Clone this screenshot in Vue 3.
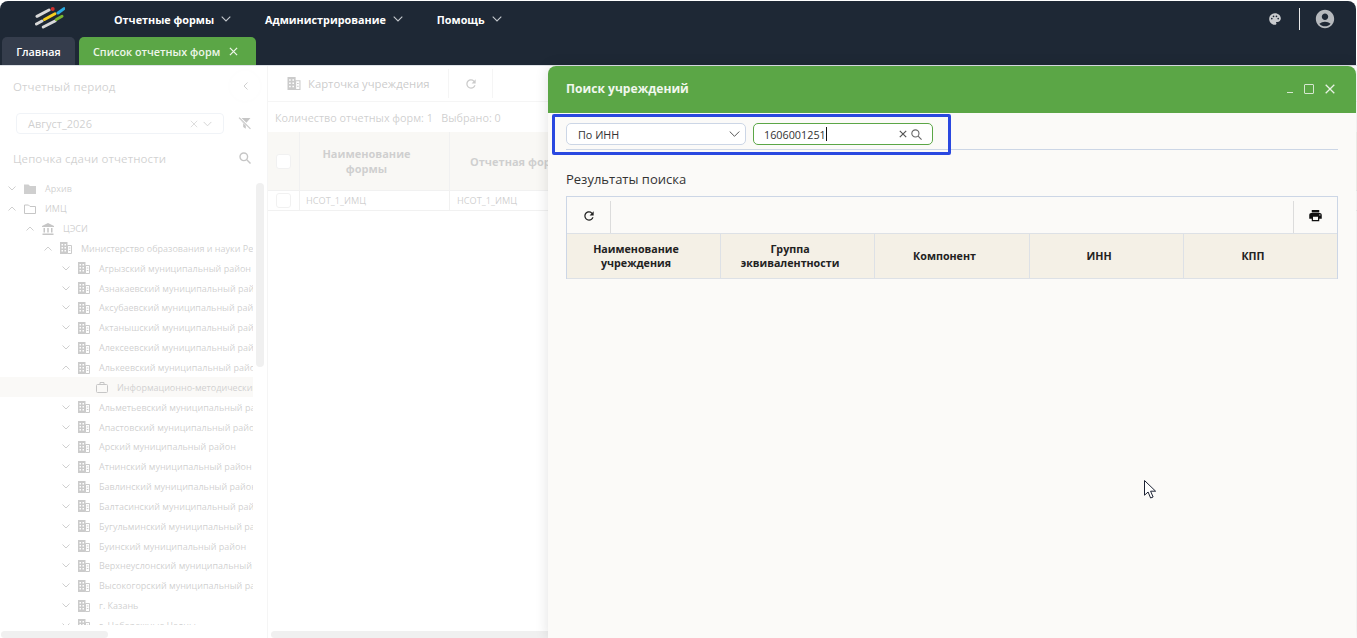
<script setup>
const icons = {
  refresh: 'M17.65 6.35A7.958 7.958 0 0 0 12 4c-4.42 0-7.99 3.58-7.99 8s3.57 8 7.99 8c3.73 0 6.84-2.55 7.73-6h-2.08A5.99 5.99 0 0 1 12 18c-3.31 0-6-2.69-6-6s2.69-6 6-6c1.66 0 3.14.69 4.22 1.78L13 11h7V4l-2.35 2.35z',
  print: 'M19 8H5c-1.66 0-3 1.34-3 3v6h4v4h12v-4h4v-6c0-1.66-1.34-3-3-3zm-3 11H8v-5h8v5zm3-7c-.55 0-1-.45-1-1s.45-1 1-1 1 .45 1 1-.45 1-1 1zm-1-9H6v4h12V3z',
  user: 'M12 2C6.48 2 2 6.48 2 12s4.48 10 10 10 10-4.48 10-10S17.52 2 12 2zm0 4c1.93 0 3.5 1.57 3.5 3.5S13.93 13 12 13s-3.5-1.57-3.5-3.5S10.07 6 12 6zm0 14c-2.03 0-4.43-.82-6.14-2.88a9.947 9.947 0 0 1 12.28 0C16.43 19.18 14.03 20 12 20z',
  palette: 'M12 2C6.49 2 2 6.49 2 12s4.49 10 10 10c1.38 0 2.5-1.12 2.5-2.5 0-.61-.23-1.2-.64-1.67a.528.528 0 0 1-.13-.33c0-.28.22-.5.5-.5H16c3.31 0 6-2.69 6-6 0-4.96-4.49-9-10-9zm-5.5 11c-.83 0-1.5-.67-1.5-1.5S5.67 10 6.5 10s1.5.67 1.5 1.5S7.33 13 6.5 13zm3-4C8.67 9 8 8.33 8 7.5S8.67 6 9.5 6s1.5.67 1.5 1.5S10.33 9 9.5 9zm5 0c-.83 0-1.5-.67-1.5-1.5S13.67 6 14.5 6s1.5.67 1.5 1.5S15.33 9 14.5 9zm3 4c-.83 0-1.5-.67-1.5-1.5s.67-1.5 1.5-1.5 1.5.67 1.5 1.5-.67 1.5-1.5 1.5z'
}
const nav = ['Отчетные формы', 'Администрирование', 'Помощь']
const districts = [
  'Агрызский муниципальный район', 'Азнакаевский муниципальный район', 'Аксубаевский муниципальный район',
  'Актанышский муниципальный район', 'Алексеевский муниципальный район'
]
const districts2 = [
  'Альметьевский муниципальный район', 'Апастовский муниципальный район', 'Арский муниципальный район',
  'Атнинский муниципальный район', 'Бавлинский муниципальный район', 'Балтасинский муниципальный район',
  'Бугульминский муниципальный район', 'Буинский муниципальный район', 'Верхнеуслонский муниципальный район',
  'Высокогорский муниципальный район', 'г. Казань', 'г. Набережные Челны'
]
const tree = [
  { t: 'Архив', d: 0, i: 'fill', open: false },
  { t: 'ИМЦ', d: 0, i: 'open', open: true },
  { t: 'ЦЭСИ', d: 1, i: 'bank', open: true },
  { t: 'Министерство образования и науки Республики Татарстан', d: 2, i: 'bld', open: true },
  ...districts.map(t => ({ t, d: 3, i: 'bld', open: false })),
  { t: 'Алькеевский муниципальный район', d: 3, i: 'bld', open: true },
  { t: 'Информационно-методический центр', d: 4, i: 'case', leaf: true, sel: true },
  ...districts2.map(t => ({ t, d: 3, i: 'bld', open: false }))
]
const cols = [
  'Наименование учреждения', 'Группа эквивалентности', 'Компонент', 'ИНН', 'КПП'
]
</script>

<template>
  <div class="shell">
    <header class="bar">
      <div class="top">
        <svg class="logo" width="30" height="22" viewBox="0 0 30 22" fill="none" stroke-linecap="round" stroke-width="3">
          <path d="M2 9.300 14 3" stroke="#d8d8d8" />
          <path d="M1.500 17 7 14" stroke="#d8d8d8" />
          <path d="M8.300 20 20 14" stroke="#d8d8d8" />
          <path d="M9.500 12.500 20 6.800" stroke="#f5cf1f" />
          <path d="M23 6 29 1.600" stroke="#29abe2" />
          <path d="M21.300 12.500 27 9.300" stroke="#79b530" />
          <circle cx="17.700" cy="2" r="2" fill="#d0312d" stroke="none" />
        </svg>
        <nav class="nav">
          <a v-for="n in nav" :key="n" class="nav-item">
            <span>{{ n }}</span>
            <svg width="10" height="6" viewBox="0 0 10 6" fill="none" stroke="#c4c8cd" stroke-width="1.100"><path d="M.7.7 5 5l4.300-4.300" /></svg>
          </a>
        </nav>
        <div class="tools">
          <svg width="14" height="14" viewBox="0 0 24 24" fill="#c9cbce"><path :d="icons.palette" /></svg>
          <i class="tool-sep"></i>
          <svg width="22" height="22" viewBox="0 0 24 24" fill="#b6b9bd"><path :d="icons.user" /></svg>
        </div>
      </div>
      <div class="tabs">
        <div class="tab home">Главная</div>
        <div class="tab active">Список отчетных форм
          <svg class="tab-x" width="9" height="9" viewBox="0 0 10 10" stroke="#eef6ea" stroke-width="1.400"><path d="m1 1 8 8M9 1 1 9" /></svg>
        </div>
      </div>
    </header>

    <div class="body">
      <aside class="side">
        <div class="side-head">
          <span class="side-title">Отчетный период</span>
          <span class="collapse">
            <svg width="5" height="8" viewBox="0 0 5 8" fill="none" stroke="#555" stroke-width="1"><path d="M4.500.5 1 4l3.500 3.500" /></svg>
          </span>
        </div>
        <div class="period-row">
          <div class="period">
            <span class="period-val">Август_2026</span>
            <svg class="period-x" width="8" height="8" viewBox="0 0 10 10" stroke="#777" stroke-width="1.100"><path d="m1 1 8 8M9 1 1 9" /></svg>
            <svg width="9" height="6" viewBox="0 0 10 6" fill="none" stroke="#666" stroke-width="1.100"><path d="M.7.7 5 5l4.300-4.300" /></svg>
          </div>
          <svg class="filter" width="13" height="13" viewBox="0 0 12 12" fill="#333"><path d="M.5 1h11L7.200 6v4.800L4.800 9.300V6z" /><path d="M.5 0 12 11" stroke="#fff" stroke-width="2.400" /><path d="M1 .5 11.500 11" stroke="#333" stroke-width="1" /></svg>
        </div>
        <div class="chain-row">
          <span class="side-title">Цепочка сдачи отчетности</span>
          <svg width="12" height="12" viewBox="0 0 12 12" fill="none" stroke="#333" stroke-width="1.400"><circle cx="4.800" cy="4.800" r="3.800" /><path d="m7.800 7.800 3.700 3.700" /></svg>
        </div>
        <div class="tree-wrap">
          <ul class="tree">
            <li v-for="n in tree" :key="n.t" class="node" :class="{ picked: n.sel }" :style="{ paddingLeft: 8 + n.d * 18 + 'px' }">
              <svg v-if="!n.leaf" class="chev" width="8" height="5" viewBox="0 0 8 5" fill="none" stroke="#555" stroke-width="1">
                <path :d="n.open ? 'M.5 4.500 4 1l3.500 3.500' : 'M.5.5 4 4 7.500.5'" />
              </svg>
              <span v-else class="chev"></span>
              <svg class="ico" width="12" height="12" viewBox="0 0 12 12">
                <path v-if="n.i === 'fill'" fill="#555" d="M0 1.500h4.500L6 3h6v8H0z" />
                <path v-else-if="n.i === 'open'" fill="none" stroke="#333" d="M.5 2h4l1.500 1.500h5.500v7H.5z" />
                <g v-else-if="n.i === 'bank'" fill="#333">
                  <path d="M6 0 12 3v1H0V3z" /><path d="M1.500 5h1.500v4.500H1.500zM5.250 5h1.500v4.500h-1.500zM9 5h1.500v4.500H9zM.5 10.500h11V12H.500z" />
                </g>
                <g v-else-if="n.i === 'bld'">
                  <path fill="#444" fill-rule="evenodd" d="M0 0h7.500v12H0zM1.500 2v1.500H3V2zm3 0v1.500H6V2zM1.500 5v1.500H3V5zm3 0v1.500H6V5zM1.500 8v1.500H3V8zm3 0v1.500H6V8z" />
                  <path fill="none" stroke="#444" d="M7.500 3.500h4v8h-4zM8.800 6h1.500M8.800 8.500h1.500" />
                </g>
                <g v-else fill="none" stroke="#333">
                  <rect x=".5" y="3.500" width="11" height="8" rx="1" /><path d="M4 3.500V1.500h4v2" />
                </g>
              </svg>
              <span class="node-t">{{ n.t }}</span>
            </li>
          </ul>
          <i class="vscroll"></i>
        </div>
        <i class="hscroll"></i>
      </aside>

      <main class="main">
        <div class="toolbar">
          <div class="card-btn">
            <svg width="14" height="13" viewBox="0 0 12 12">
              <path fill="#444" fill-rule="evenodd" d="M0 0h7.500v12H0zM1.500 2v1.500H3V2zm3 0v1.500H6V2zM1.500 5v1.500H3V5zm3 0v1.500H6V5zM1.500 8v1.500H3V8zm3 0v1.500H6V8z" />
              <path fill="none" stroke="#444" d="M7.500 3.500h4v8h-4zM8.800 6h1.500M8.800 8.500h1.500" />
            </svg>
            Карточка учреждения
          </div>
          <div class="refresh-btn">
            <svg width="14" height="14" viewBox="0 0 24 24" fill="#444"><path :d="icons.refresh" /></svg>
          </div>
        </div>
        <div class="count">Количество отчетных форм: 1 &nbsp; Выбрано: 0</div>
        <div class="grid-head">
          <div class="g-check"><i class="box"></i></div>
          <div class="g-name">Наименование<br />формы</div>
          <div class="g-form">Отчетная форма</div>
        </div>
        <div class="grid-row">
          <div class="g-check"><i class="box"></i></div>
          <div class="g-name left">НСОТ_1_ИМЦ</div>
          <div class="g-form left">НСОТ_1_ИМЦ</div>
        </div>
        <i class="hscroll main-h"></i>
      </main>
    </div>

    <div class="veil"></div>

    <section class="modal">
      <div class="m-head">
        <span class="m-title">Поиск учреждений</span>
        <div class="m-tools">
          <i class="w-min"></i>
          <i class="w-max"></i>
          <svg width="10" height="10" viewBox="0 0 10 10" stroke="#e9f2e5" stroke-width="1.300"><path d="m.7.7 8.600 8.600M9.300.7.700 9.300" /></svg>
        </div>
      </div>
      <div class="m-body">
        <div class="search">
          <div class="field f-sel">
            <span>По ИНН</span>
            <svg width="11" height="6" viewBox="0 0 11 6" fill="none" stroke="#555" stroke-width="1"><path d="m.7.500 4.800 4.800L10.300.5" /></svg>
          </div>
          <div class="field inp">
            <span class="inp-v">1606001251</span><i class="caret"></i>
            <svg class="inp-x" width="8" height="8" viewBox="0 0 10 10" stroke="#555" stroke-width="1.500"><path d="m1 1 8 8M9 1 1 9" /></svg>
            <svg width="11" height="11" viewBox="0 0 12 12" fill="none" stroke="#666" stroke-width="1.200"><circle cx="4.800" cy="4.800" r="3.900" /><path d="m7.800 7.800 3.700 3.700" /></svg>
          </div>
        </div>
        <h3 class="res">Результаты поиска</h3>
        <div class="rtable">
          <div class="rtools">
            <div class="rbtn left">
              <svg width="14" height="14" viewBox="0 0 24 24" fill="#222"><path :d="icons.refresh" /></svg>
            </div>
            <div class="rbtn right">
              <svg width="15" height="15" viewBox="0 0 24 24" fill="#111"><path :d="icons.print" /></svg>
            </div>
          </div>
          <div class="rhead">
            <div v-for="c in cols" :key="c" class="rcol"><span>{{ c }}</span></div>
          </div>
        </div>
      </div>
    </section>

    <div class="mark"></div>

    <svg class="cursor" width="14" height="20" viewBox="0 0 14 20" fill="#fff" stroke="#1c2233" stroke-width="1">
      <path d="M.5.500v14.700l3.600-3.200 2.500 6 2.500-1-2.500-5.800h5z" />
    </svg>
  </div>
</template>

<style scoped>
.shell {
  position: relative;
  height: 638px;
  width: 1357px;
  overflow: hidden;
  background: #fff;
  font-family: "Open Sans", "Noto Sans", sans-serif;
  color: #333;
}
.bar {
  margin: 1px 1px 0 0;
  height: 64px;
  background: #1e2835;
  border-radius: 8px 8px 0 0;
  display: flex;
  flex-direction: column;
}
.top {
  height: 36px;
  display: flex;
  align-items: center;
  position: relative;
}
.logo { margin-left: 35px; margin-top: -2px; flex: none; }
.nav { display: flex; margin-left: 49px; gap: 34px; }
.nav-item {
  display: flex;
  align-items: center;
  gap: 7px;
  font-size: 10.800px;
  font-weight: 700;
  color: #fff;
}
.tools { margin-left: auto; display: flex; align-items: center; margin-right: 20px; }
.tool-sep { width: 1px; height: 22px; background: #e8e8e8; margin: 0 14px 0 17px; }
.tabs { display: flex; padding-left: 2px; gap: 4px; flex: 1; align-items: flex-end; }
.tab {
  height: 28px;
  display: flex;
  align-items: center;
  font-size: 10.800px;
  border-radius: 5px 5px 0 0;
  color: #fff;
  font-weight: 600;
}
.home { width: 73px; justify-content: center; background: #353d4c; }
.active { width: 177px; padding-left: 14px; box-sizing: border-box; background: #5ba646; color: #eef6ea; gap: 9px; }
.tab-x { flex: none; }

.body {
  flex: 1;
  display: flex;
  height: 573px;
  border-top: 1px solid #dfe3e8;
  box-sizing: border-box;
}
.side {
  width: 268px;
  box-sizing: border-box;
  border-right: 1px solid #dcdcdc;
  position: relative;
  flex: none;
  height: 572px;
}
.side-head, .chain-row {
  display: flex;
  align-items: center;
  justify-content: space-between;
  padding: 0 16px 0 13px;
}
.side-head { height: 40px; }
.side-title { font-size: 11.500px; color: #5c5c5c; letter-spacing: .1px; }
.collapse {
  width: 30px; height: 30px; margin-right: -9px;
  border-radius: 50%;
  display: flex; align-items: center; justify-content: center;
  box-shadow: 0 0 5px rgba(0,0,0,.06);
}
.period-row {
  display: flex;
  align-items: center;
  justify-content: space-between;
  padding: 7px 16px 0 16px;
}
.period {
  width: 208px; height: 21px;
  box-sizing: border-box;
  border: 1px solid #c9d3e3;
  border-radius: 4px;
  display: flex;
  align-items: center;
  padding: 0 11px 0 11px;
  font-size: 11px;
  color: #555;
}
.period-val { flex: 1; }
.period-x { margin-right: 5px; }
.chain-row { height: 22px; margin-top: 13px; }
.tree-wrap {
  position: relative;
  height: 446px;
  margin-top: 10px;
  width: 266px;
  overflow: hidden;
}
.tree {
  list-style: none;
  margin: 0;
  padding: 0;
  width: 253px;
  overflow: hidden;
}
.node {
  display: flex;
  align-items: center;
  height: 19.850px;
  white-space: nowrap;
  overflow: hidden;
  font-size: 9px;
  color: #555;
}
.picked { background: #ece8e0; }
.chev { width: 8px; flex: none; margin-right: 8px; }
.ico { flex: none; margin-right: 9px; }
.node-t { flex: none; }
.vscroll {
  position: absolute; left: 256px; top: 4px; width: 8px; height: 184px;
  background: #c8c8c8; border-radius: 4px;
}
.hscroll {
  position: absolute; left: 1px; bottom: 0; width: 107px; height: 7px;
  background: #c8c8c8; border-radius: 4px;
}
.main { flex: 1; position: relative; }
.toolbar {
  height: 36px;
  box-sizing: border-box;
  display: flex;
  align-items: stretch;
  border-bottom: 1px solid #dcdcdc;
}
.card-btn {
  width: 181px;
  box-sizing: border-box;
  display: flex;
  align-items: center;
  gap: 7px;
  padding-left: 19px;
  border-right: 1px solid #dcdcdc;
  font-size: 11.300px;
  color: #444;
  margin: 3px 0;
}
.refresh-btn {
  width: 43px;
  display: flex; align-items: center; justify-content: center;
  border-right: 1px solid #dcdcdc;
  margin: 3px 0;
}
.count { height: 30px; display: flex; align-items: center; padding-left: 7px; font-size: 10.800px; color: #555; }
.grid-head {
  display: flex;
  height: 59px;
  background: #e8e4da;
  border-bottom: 1px solid #ccc;
  box-sizing: border-box;
  font-size: 11px;
  font-weight: 700;
  color: #555;
}
.grid-row {
  display: flex;
  height: 20px;
  box-sizing: border-box;
  border-bottom: 1px solid #ccc;
  font-size: 9.200px;
  color: #555;
}
.g-check { width: 31px; display: flex; align-items: center; justify-content: center; border-right: 1px solid #ccc; }
.g-name { width: 150px; box-sizing: border-box; display: flex; align-items: center; justify-content: center; text-align: center; border-right: 1px solid #ccc; padding-right: 16px; }
.g-form { width: 300px; padding-left: 20px; display: flex; align-items: center; }
.g-name.left { justify-content: flex-start; padding: 0 0 0 6px; }
.g-form.left { padding-left: 7px; }
.box { width: 13px; height: 13px; background: #fff; border: 1px solid #ccc; border-radius: 3px; display: block; }
.main-h { left: 3px; width: 280px; }

.veil { position: absolute; left: 0; right: 0; top: 66px; bottom: 0; background: rgba(255,255,255,.72); }

.modal {
  position: absolute;
  left: 548px; top: 66px; right: 1px; bottom: 0;
  background: #fbfaf8;
  border-radius: 8px 8px 0 0;
  box-shadow: 0 0 14px rgba(0,0,0,.12);
  display: flex;
  flex-direction: column;
}
.m-head {
  height: 47px;
  flex: none;
  background: #5ba646;
  border-radius: 8px 8px 0 0;
  display: flex;
  align-items: center;
  justify-content: space-between;
  padding: 0 21px 0 18px;
}
.m-title { color: #f1f7ee; font-size: 12.100px; font-weight: 700; margin-top: -3px; }
.m-tools { display: flex; align-items: center; gap: 11px; margin-top: -1px; }
.w-min { width: 6px; height: 1px; background: #d6e7d0; margin-top: 7px; }
.w-max { width: 8px; height: 8px; border: 1px solid #d6e7d0; border-radius: 1px; }
.m-body { padding: 10px 18px 0; }
.search {
  display: flex;
  gap: 7px;
  padding-bottom: 4px;
  border-bottom: 1px solid #ccd6e6;
}
.field {
  width: 180px; height: 22px;
  box-sizing: border-box;
  border-radius: 5px;
  background: #fff;
  display: flex;
  align-items: center;
  font-size: 10.800px;
  color: #333;
}
.f-sel { border: 1px solid #ccd6e6; justify-content: space-between; padding: 0 5px 0 11px; }
.inp { border: 1px solid #5ba646; padding: 0 10px 0 10px; }
.inp-v { color: #333; }
.caret { width: 1px; height: 14px; background: #111; margin-left: 0; }
.inp-x { margin-left: auto; margin-right: 4px; flex: none; }
.res { margin: 21px 0 0; font-size: 13px; font-weight: 500; color: #333; line-height: 17px; }
.rtable {
  margin-top: 8px;
  border: 1px solid #ccd6e6;
  border-bottom: none;
}
.rtools {
  height: 36px;
  display: flex;
  justify-content: space-between;
}
.rbtn { width: 43px; display: flex; align-items: center; justify-content: center; margin: 4px 0 0; padding-bottom: 3px; }
.rbtn.left { border-right: 1px solid #dcdcdc; }
.rbtn.right { border-left: 1px solid #dcdcdc; }
.rhead {
  display: grid;
  grid-template-columns: 154px 154px 155px 154px 1fr;
  height: 46px;
  box-sizing: border-box;
  background: #f4f0e6;
  border-top: 1px solid #dde1e6;
  border-bottom: 1px solid #dde1e6;
}
.rcol {
  display: flex;
  align-items: center;
  justify-content: center;
  text-align: center;
  font-size: 10.700px;
  line-height: 14.500px;
  font-weight: 700;
  color: #222;
  border-right: 1px solid #dde1e6;
  padding: 0 25px 0 10px;
}
.rcol:last-child { border-right: none; }
.mark {
  position: absolute;
  left: 552px; top: 114px;
  width: 399px; height: 41px;
  box-sizing: border-box;
  border: 3px solid #2a48e0;
  border-radius: 2px;
  pointer-events: none;
}
.cursor { position: absolute; left: 1144px; top: 480px; }
</style>

<style>
html, body { margin: 0; overflow: hidden; background: #fff; }
</style>
